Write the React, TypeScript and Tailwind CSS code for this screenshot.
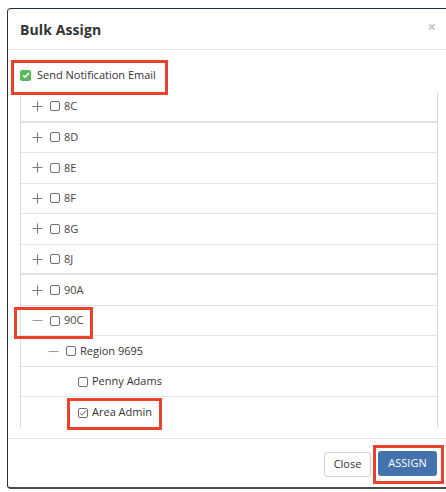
import React from "react";

const Plus = () => (
  <svg width="11" height="11" viewBox="0 0 11 11" className="shrink-0">
    <path d="M5.5 0.5v10M0.5 5.5h10" stroke="#7a7a7a" strokeWidth="1.1" fill="none" />
  </svg>
);
const Minus = () => (
  <svg width="11" height="11" viewBox="0 0 11 11" className="shrink-0">
    <path d="M0.5 5.5h10" stroke="#9a9a9a" strokeWidth="1.1" fill="none" />
  </svg>
);
const Box = ({ checked = false }: { checked?: boolean }) => (
  <span className="shrink-0 w-[10px] h-[10px] border border-[#707070] rounded-[2px] bg-white flex items-center justify-center">
    {checked && (
      <svg width="8" height="8" viewBox="0 0 8 8">
        <path d="M1 4.2l2 2L7 1.5" stroke="#606060" strokeWidth="1" fill="none" />
      </svg>
    )}
  </span>
);

type Row = { label: string; level: number; icon: "plus" | "minus" | "none"; checked?: boolean; thick?: boolean };
const rows: Row[] = [
  { label: "8C", level: 0, icon: "plus", thick: true },
  { label: "8D", level: 0, icon: "plus" },
  { label: "8E", level: 0, icon: "plus" },
  { label: "8F", level: 0, icon: "plus" },
  { label: "8G", level: 0, icon: "plus" },
  { label: "8J", level: 0, icon: "plus", thick: true },
  { label: "90A", level: 0, icon: "plus" },
  { label: "90C", level: 0, icon: "minus" },
  { label: "Region 9695", level: 1, icon: "minus" },
  { label: "Penny Adams", level: 2, icon: "none" },
  { label: "Area Admin", level: 2, icon: "none", checked: true },
];

const Red = ({ cls }: { cls: string }) => (
  <div className={`absolute border-[3px] border-[#e8412c] pointer-events-none ${cls}`} />
);

export default function App() {
  return (
    <div className="relative w-[446px] h-[492px] bg-white overflow-hidden font-['Open_Sans',sans-serif] text-[#333]">
      <div className="pt-[8px] pl-[7px]">
        <div className="w-[439px] h-[481px] bg-white border-l border-t border-b-2 border-l-[#2b2f36] border-t-[#1f2a44] border-b-[#4a4a4a] rounded-l-[4px] flex flex-col">
          <div className="h-[41px] shrink-0 border-b border-[#e5e5e5] flex items-center justify-between pl-[12px] pr-[10px]">
            <span className="text-[14px] font-bold text-[#333] tracking-[0.1px]">Bulk Assign</span>
            <span className="text-[15px] font-bold text-[#c4c4c4] leading-none -mt-[6px]">×</span>
          </div>
          <div className="h-[388px] shrink-0 pl-[12px] pt-[16px]">
            <div className="h-[18px] flex items-center gap-[6px] mb-[8px]">
              <span className="w-[11px] h-[11px] rounded-[2px] bg-[#5cb85c] flex items-center justify-center">
                <svg width="8" height="8" viewBox="0 0 8 8">
                  <path d="M1.2 4.2l1.9 1.9L6.9 2" stroke="#fff" strokeWidth="1.5" fill="none" />
                </svg>
              </span>
              <span className="text-[11px] text-[#333]">Send Notification Email</span>
            </div>
            <div className="w-[418px] h-[336px] border-l border-r border-[#dcdcdc] flex flex-col">
              {rows.map((r, i) => (
                <div
                  key={r.label}
                  className={`h-[30.55px] shrink-0 flex items-center ${
                    i === rows.length - 1 ? "" : r.thick ? "border-b-2 border-[#e2e2e2]" : "border-b border-[#e2e2e2]"
                  } ${r.level === 0 ? "pl-[11px]" : r.level === 1 ? "pl-[27px]" : "pl-[57px]"}`}
                >
                  {r.icon === "plus" && <Plus />}
                  {r.icon === "minus" && <Minus />}
                  {r.icon !== "none" && <span className="w-[7px] shrink-0" />}
                  <Box checked={r.checked} />
                  <span className={`ml-[4px] text-[11px] ${r.level === 0 ? "text-[#444]" : "text-[#333]"}`}>{r.label}</span>
                </div>
              ))}
            </div>
          </div>
          <div className="flex-1 border-t border-[#e5e5e5] flex justify-end items-start pt-[12px] pr-[9px] gap-[7px]">
            <button className="mt-[1px] w-[47px] h-[25px] border border-[#cfcfcf] rounded-[3px] bg-white text-[11px] text-[#333]">
              Close
            </button>
            <button className="w-[59px] h-[25px] rounded-[3px] bg-[#4472ad] text-[11px] text-white">ASSIGN</button>
          </div>
        </div>
      </div>
      <Red cls="left-[11px] top-[60px] w-[157px] h-[35px]" />
      <Red cls="left-[14px] top-[307px] w-[79px] h-[32px]" />
      <Red cls="left-[67px] top-[398px] w-[95px] h-[32px]" />
      <Red cls="left-[373px] top-[445px] w-[71px] h-[39px]" />
    </div>
  );
}
